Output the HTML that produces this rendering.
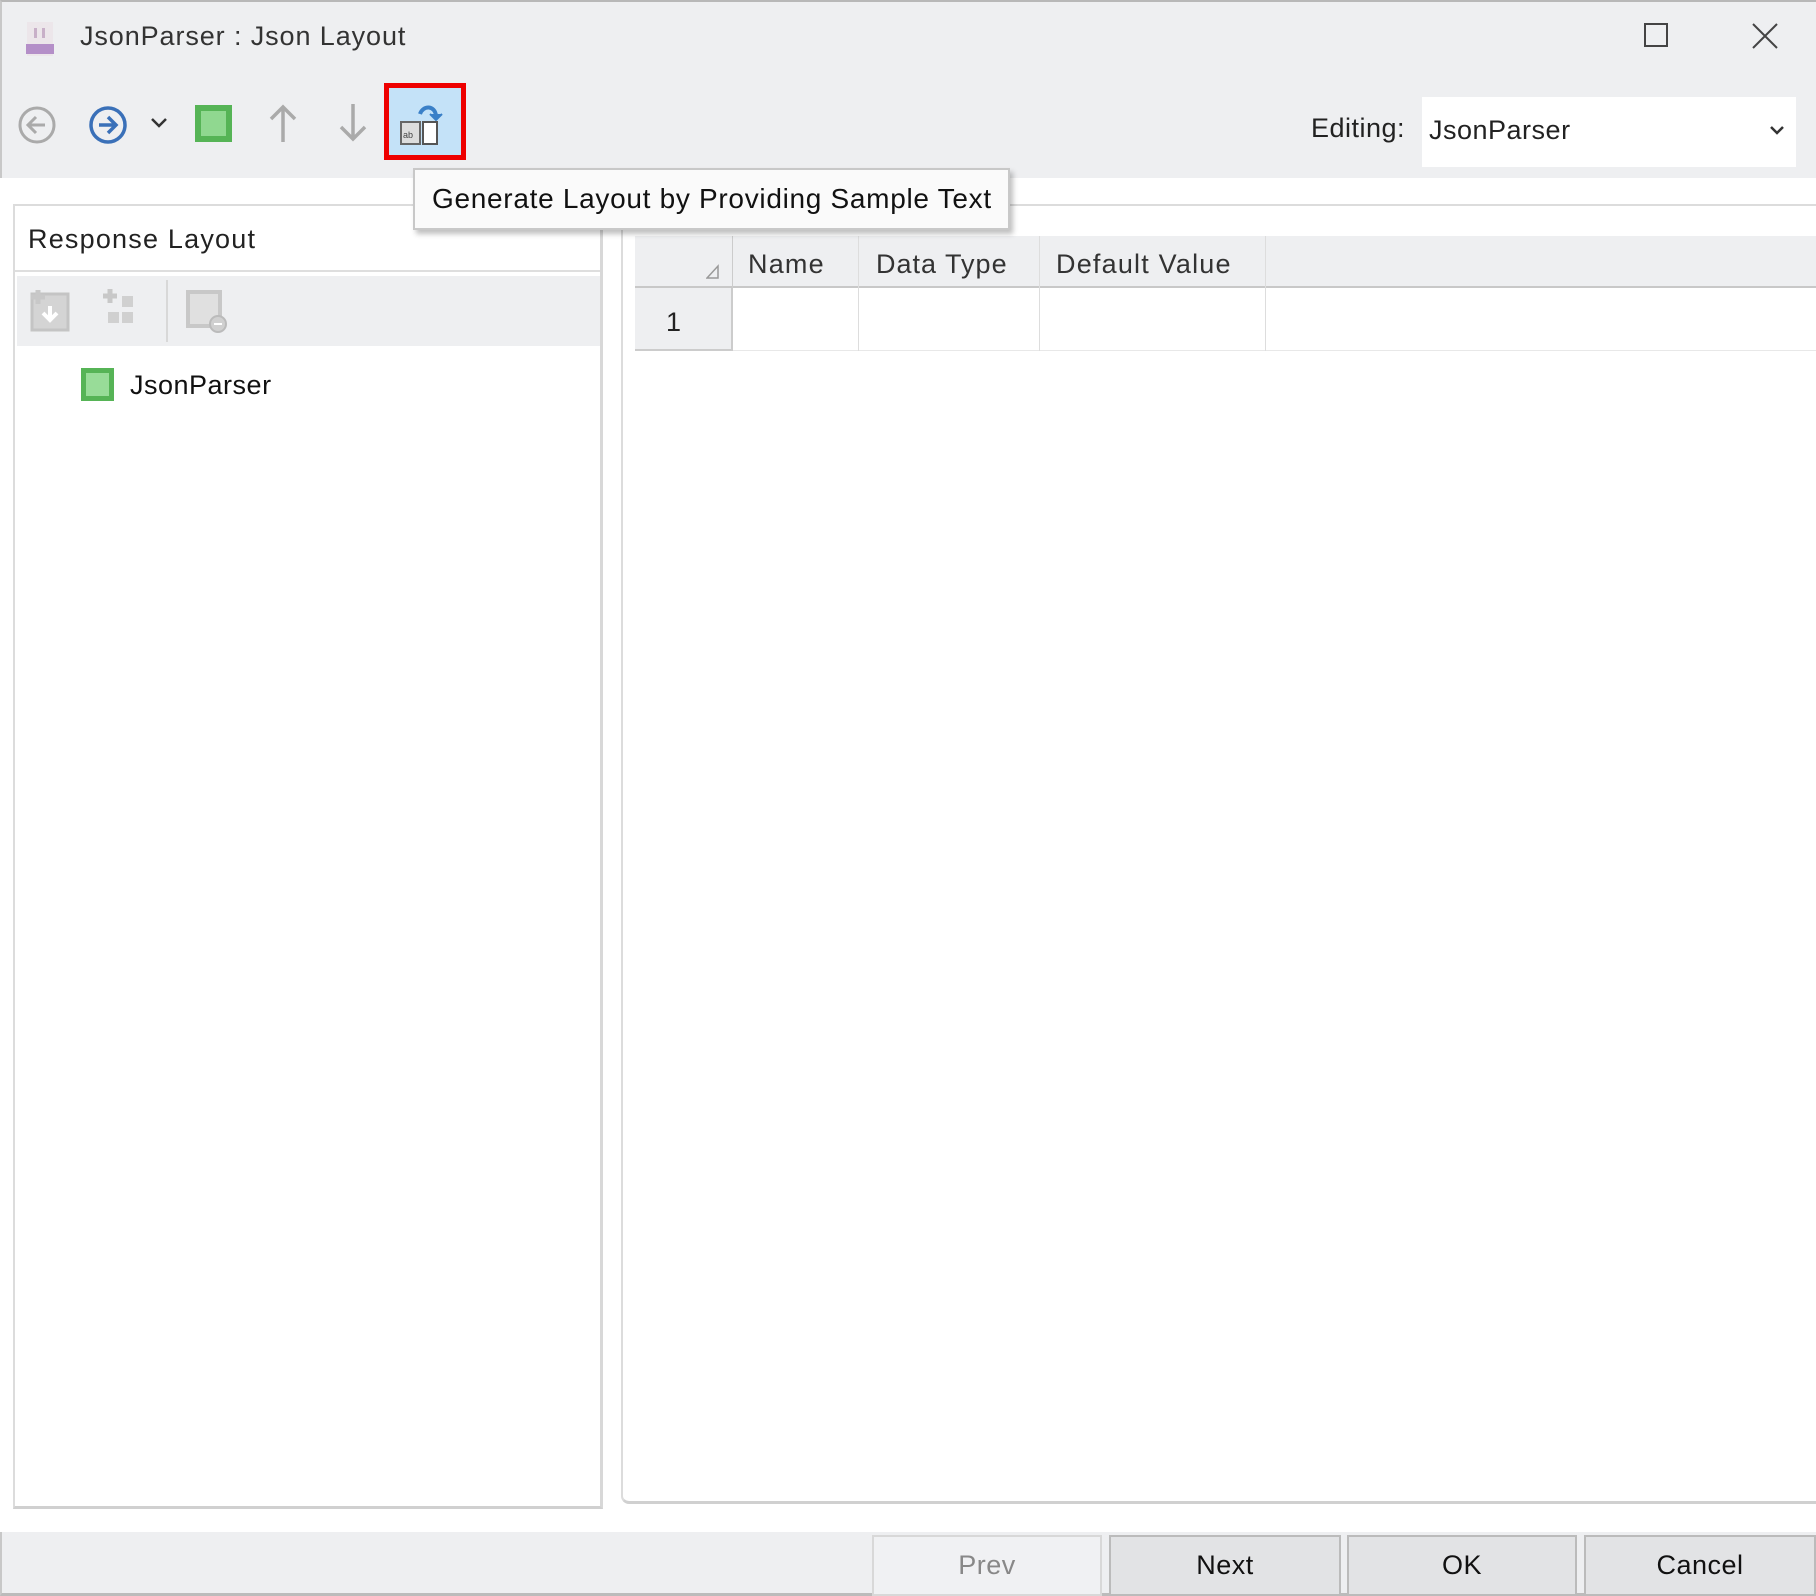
<!DOCTYPE html>
<html><head><meta charset="utf-8"><style>
*{margin:0;padding:0;box-sizing:border-box}
body{width:1816px;height:1596px;background:#fff;position:relative;overflow:hidden;font-family:"Liberation Sans",sans-serif;color:#222}
.a{position:absolute}
.t{position:absolute;white-space:nowrap;font-size:27px;line-height:1;letter-spacing:0.5px}
</style></head><body>
<div class="a" style="left:0;top:0;width:1816px;height:178px;background:#eeeff1;border-top:2px solid #b8b8b8;border-left:2px solid #c8c8c8"></div>
<svg class="a" style="left:24px;top:20px" width="34" height="36" viewBox="0 0 34 36"><rect x="3" y="2" width="26" height="34" fill="#ece6ea"/><rect x="2" y="24" width="28" height="10" fill="#b48fc8"/><rect x="10" y="8" width="3" height="10" fill="#c8b0c8"/><rect x="18" y="8" width="3" height="10" fill="#c8b0c8"/></svg>
<div class="t" style="left:80px;top:23px;color:#333;letter-spacing:0.9px">JsonParser : Json Layout</div>
<div class="a" style="left:1644px;top:23px;width:24px;height:24px;border:2px solid #444"></div>
<svg class="a" style="left:1750px;top:21px" width="30" height="30"><path d="M3 3L27 27M27 3L3 27" stroke="#444" stroke-width="2"/></svg>
<svg class="a" style="left:15px;top:104px" width="44" height="42"><circle cx="22" cy="21" r="17" fill="none" stroke="#aaa" stroke-width="3"/><path d="M30 21H14M21 13l-8 8 8 8" fill="none" stroke="#aaa" stroke-width="3"/></svg>
<svg class="a" style="left:86px;top:104px" width="44" height="42"><circle cx="22" cy="21" r="17" fill="none" stroke="#3a70b8" stroke-width="3.5"/><path d="M13 21h16M22 13l8 8-8 8" fill="none" stroke="#3a70b8" stroke-width="3.5"/></svg>
<svg class="a" style="left:149px;top:116px" width="20" height="14"><path d="M3 3l7 7 7-7" fill="none" stroke="#333" stroke-width="2.5"/></svg>
<div class="a" style="left:195px;top:105px;width:37px;height:37px;background:#90d890;border:6px solid #56b456"></div>
<svg class="a" style="left:266px;top:102px" width="34" height="42"><path d="M17 40V5M5 17L17 5l12 12" fill="none" stroke="#aaa" stroke-width="3.5"/></svg>
<svg class="a" style="left:336px;top:102px" width="34" height="42"><path d="M17 2v35M5 25l12 12 12-12" fill="none" stroke="#aaa" stroke-width="3.5"/></svg>
<div class="a" style="left:384px;top:83px;width:82px;height:77px;border:5px solid #e00;background:#c4e2f8"></div>
<svg class="a" style="left:398px;top:100px" width="56" height="50"><path d="M22 14c3-9 15-9 16 2" fill="none" stroke="#3a80c8" stroke-width="4"/><path d="M32 14l6 6 6-6" fill="#3a80c8" stroke="#3a80c8" stroke-width="2"/><rect x="3" y="22" width="19" height="22" fill="#ddd" stroke="#666" stroke-width="2"/><rect x="25" y="22" width="14" height="22" fill="#fff" stroke="#555" stroke-width="2"/><text x="5" y="38" font-size="9" font-family="Liberation Sans" fill="#444">ab</text></svg>
<div class="t" style="left:1311px;top:115px">Editing:</div>
<div class="a" style="left:1422px;top:97px;width:374px;height:70px;background:#fff"></div>
<div class="t" style="left:1429px;top:117px">JsonParser</div>
<svg class="a" style="left:1768px;top:124px" width="18" height="12"><path d="M3 3l6 6 6-6" fill="none" stroke="#333" stroke-width="2.5"/></svg>
<div class="a" style="left:13px;top:204px;width:590px;height:1305px;border:2px solid #dcdcdc;border-bottom:3px solid #d0d0d0;border-right:3px solid #d8d8d8"></div>
<div class="t" style="left:28px;top:226px;letter-spacing:1.2px">Response Layout</div>
<div class="a" style="left:15px;top:270px;width:585px;height:2px;background:#dedede"></div>
<div class="a" style="left:17px;top:276px;width:583px;height:70px;background:#eeeff1"></div>
<svg class="a" style="left:26px;top:284px" width="52" height="52"><rect x="6" y="10" width="36" height="36" fill="#d4d4d4" stroke="#c4c4c4" stroke-width="3"/><path d="M12 6v14M5 13h14" stroke="#c8c8c8" stroke-width="5"/><path d="M24 22v14M17 29l7 7 7-7" stroke="#fff" stroke-width="4" fill="none"/></svg>
<svg class="a" style="left:96px;top:284px" width="52" height="52"><path d="M14 5v14M7 12h14" stroke="#c8c8c8" stroke-width="5"/><rect x="26" y="12" width="11" height="11" fill="#d0d0d0"/><rect x="12" y="28" width="11" height="11" fill="#d0d0d0"/><rect x="26" y="28" width="11" height="11" fill="#d0d0d0"/></svg>
<div class="a" style="left:166px;top:280px;width:2px;height:62px;background:#d8d8d8"></div>
<svg class="a" style="left:184px;top:284px" width="52" height="52"><rect x="4" y="8" width="32" height="34" fill="#e0e0e0" stroke="#c8c8c8" stroke-width="4"/><circle cx="34" cy="40" r="8" fill="#d0d0d0" stroke="#bbb" stroke-width="2"/><path d="M30 40h8" stroke="#fff" stroke-width="2"/></svg>
<div class="a" style="left:81px;top:368px;width:33px;height:33px;background:#98dc98;border:5px solid #56b456"></div>
<div class="t" style="left:130px;top:372px;color:#111">JsonParser</div>
<div class="a" style="left:621px;top:204px;width:1200px;height:1300px;border:2px solid #dcdcdc;border-bottom:3px solid #d0d0d0;border-right:none;border-radius:8px 0 0 8px"></div>
<div class="a" style="left:635px;top:236px;width:1181px;height:52px;background:#eeeff1;border-bottom:2px solid #c8c8c8"></div>
<div class="a" style="left:635px;top:288px;width:98px;height:63px;background:#eeeff1;border-bottom:2px solid #ccc;border-right:2px solid #ccc"></div>
<div class="a" style="left:733px;top:350px;width:1083px;height:1px;background:#e8e8e8"></div>
<div class="a" style="left:732px;top:236px;width:1px;height:52px;background:#ccc"></div>
<div class="a" style="left:858px;top:236px;width:1px;height:115px;background:#ddd"></div>
<div class="a" style="left:1039px;top:236px;width:1px;height:115px;background:#ddd"></div>
<div class="a" style="left:1265px;top:236px;width:1px;height:115px;background:#ddd"></div>
<svg class="a" style="left:706px;top:264px" width="14" height="16"><path d="M12 2V14H1z" fill="none" stroke="#999" stroke-width="1.5"/></svg>
<div class="t" style="left:748px;top:251px;color:#333;letter-spacing:1.2px">Name</div>
<div class="t" style="left:876px;top:251px;color:#333;letter-spacing:1px">Data Type</div>
<div class="t" style="left:1056px;top:251px;color:#333;letter-spacing:1.2px">Default Value</div>
<div class="t" style="left:666px;top:309px;color:#222">1</div>
<div class="a" style="left:413px;top:168px;width:597px;height:62px;background:#fafafa;border:2px solid #c8c8c8;box-shadow:3px 4px 5px rgba(0,0,0,.25)"></div>
<div class="t" style="left:432px;top:185px;color:#111;font-size:28px;letter-spacing:0.7px">Generate Layout by Providing Sample Text</div>
<div class="a" style="left:0;top:1532px;width:1816px;height:64px;background:#eeeff1;border-left:2px solid #c8c8c8;border-bottom:3px solid #bbb"></div>
<div class="a" style="left:872px;top:1535px;width:230px;height:61px;background:#f0f1f3;border:2px solid #d8d8d8"></div>
<div class="a" style="left:1109px;top:1535px;width:232px;height:61px;background:#e2e3e5;border:2px solid #bbb"></div>
<div class="a" style="left:1347px;top:1535px;width:230px;height:61px;background:#e2e3e5;border:2px solid #bbb"></div>
<div class="a" style="left:1584px;top:1535px;width:232px;height:61px;background:#e2e3e5;border:2px solid #bbb"></div>
<div class="t" style="left:872px;width:230px;text-align:center;top:1552px;color:#888">Prev</div>
<div class="t" style="left:1109px;width:232px;text-align:center;top:1552px;color:#111">Next</div>
<div class="t" style="left:1347px;width:230px;text-align:center;top:1552px;color:#111">OK</div>
<div class="t" style="left:1584px;width:232px;text-align:center;top:1552px;color:#111">Cancel</div>
</body></html>
